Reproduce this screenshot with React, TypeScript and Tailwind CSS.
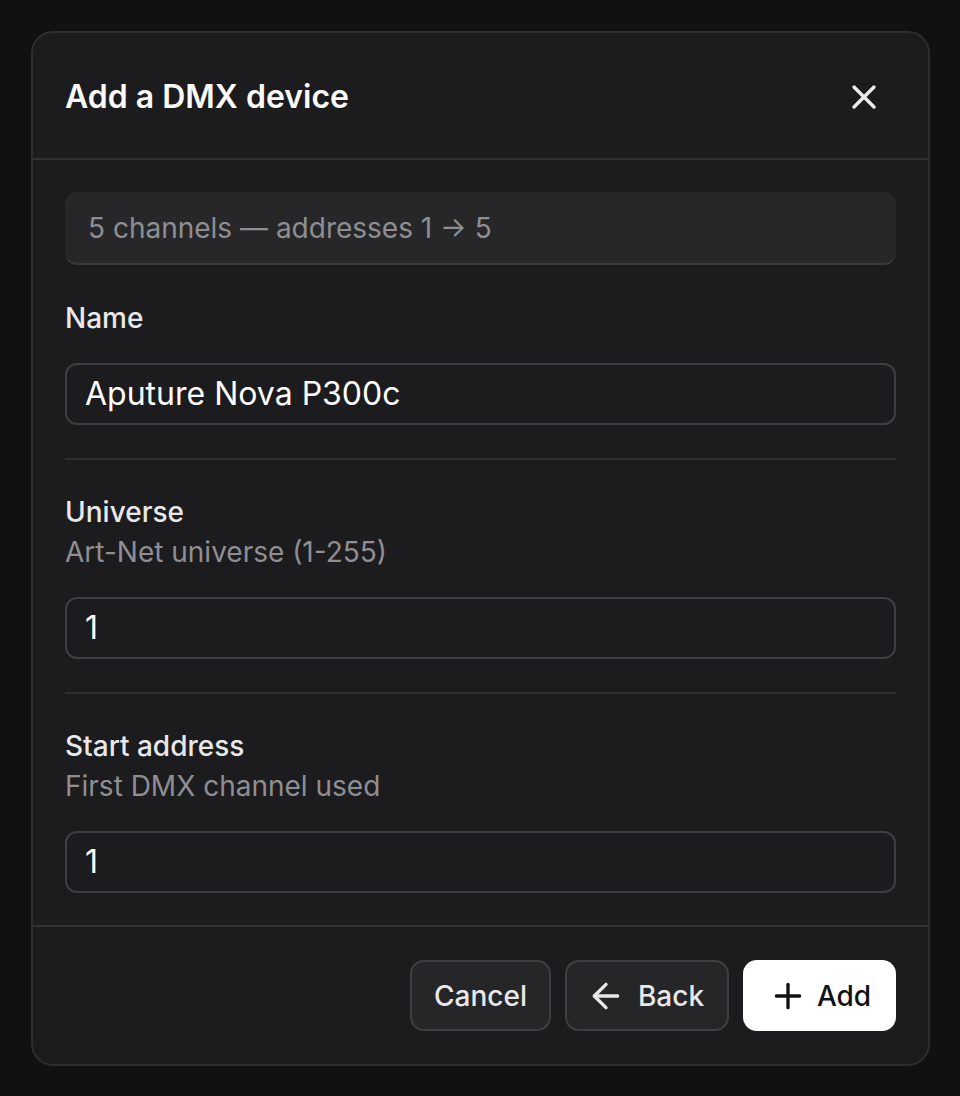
import React from "react";

const XIcon = () => (
  <svg width="40" height="40" viewBox="0 0 24 24" fill="none" stroke="currentColor" strokeWidth="2" strokeLinecap="round" strokeLinejoin="round">
    <path d="M18 6 6 18" />
    <path d="m6 6 12 12" />
  </svg>
);

const ArrowLeft = () => (
  <svg width="40" height="40" viewBox="0 0 24 24" fill="none" stroke="currentColor" strokeWidth="2" strokeLinecap="round" strokeLinejoin="round">
    <path d="m12 19-7-7 7-7" />
    <path d="M19 12H5" />
  </svg>
);

const Plus = () => (
  <svg width="40" height="40" viewBox="0 0 24 24" fill="none" stroke="currentColor" strokeWidth="2" strokeLinecap="round" strokeLinejoin="round">
    <path d="M5 12h14" />
    <path d="M12 5v14" />
  </svg>
);

function Field({ label, hint, value }: { label: string; hint?: string; value: string }) {
  return (
    <div className="flex flex-col">
      <div className="text-[28px] leading-[40px] font-medium text-[#e8e8ea]">{label}</div>
      {hint && <div className="text-[28px] leading-[40px] text-[#8e8e93]">{hint}</div>}
      <div className="mt-[25px] h-[62px] rounded-[12px] border-2 border-[#3f3f43] flex items-center px-[18px]">
        <span className="text-[32px] text-white">{value}</span>
      </div>
    </div>
  );
}

export default function App() {
  return (
    <div className="w-[960px] h-[1096px] bg-[#111113] pt-[31px] pl-[31px]" style={{ fontFamily: "Inter, 'Noto Sans', sans-serif" }}>
      <div className="w-[899px] h-[1035px] bg-[#1c1c1e] border-2 border-[#2e2e31] rounded-[22px] flex flex-col overflow-hidden">
        <div className="h-[127px] flex items-center justify-between pl-[32px] pr-[44px] pt-[3px] border-b-2 border-[#313134] shrink-0">
          <h1 className="text-[32px] font-semibold text-[#fafafa]">Add a DMX device</h1>
          <span className="text-[#ececec]"><XIcon /></span>
        </div>
        <div className="flex-1 px-[32px] pt-[32px] flex flex-col">
          <div className="h-[73px] rounded-[12px] bg-[#27272a] border-b-2 border-[#3a3a3d] flex items-center px-[23px]">
            <span className="text-[28px] text-[#8e8e93]">5 channels — addresses 1 → 5</span>
          </div>
          <div className="mt-[33px]">
            <Field label="Name" value="Aputure Nova P300c" />
          </div>
          <div className="mt-[33px] h-[2px] bg-[#2f2f32]" />
          <div className="mt-[32px]">
            <Field label="Universe" hint="Art-Net universe (1-255)" value="1" />
          </div>
          <div className="mt-[33px] h-[2px] bg-[#2f2f32]" />
          <div className="mt-[32px]">
            <Field label="Start address" hint="First DMX channel used" value="1" />
          </div>
        </div>
        <div className="h-[139px] border-t-2 border-[#313134] flex items-start justify-end gap-[14px] pt-[33px] pr-[32px] shrink-0">
          <button className="h-[71px] w-[141px] rounded-[14px] border-2 border-[#3f3f43] bg-[#262628] text-[28px] font-medium text-[#e8e8ea] flex items-center justify-center">Cancel</button>
          <button className="h-[71px] w-[164px] rounded-[14px] border-2 border-[#3f3f43] bg-[#262628] text-[28px] font-medium text-[#e8e8ea] flex items-center justify-center gap-[12px]">
            <span className="-ml-[4px]"><ArrowLeft /></span>Back
          </button>
          <button className="h-[71px] w-[153px] rounded-[14px] bg-white text-[28px] font-medium text-[#111] flex items-center justify-center gap-[9px]">
            <Plus />Add
          </button>
        </div>
      </div>
    </div>
  );
}
